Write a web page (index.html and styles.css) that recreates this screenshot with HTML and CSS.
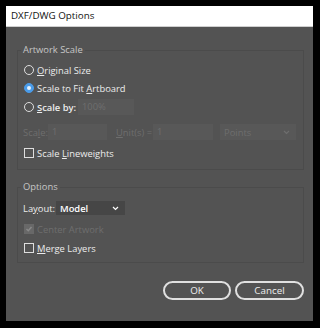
FILE: index.html
```html
<!DOCTYPE html>
<html lang="en">
<head>
    <meta charset="UTF-8">
    <meta name="viewport" content="width=device-width, initial-scale=1.0">
    <title>DXF/DWG Options</title>
    <link rel="stylesheet" href="styles.css">
</head>
<body>
    <div class="dialog">
        <div class="titlebar">DXF/DWG Options</div>
        <div class="content">
            <fieldset class="group group-scale">
                <legend>Artwork Scale</legend>
                <div class="row row-first">
                    <span class="radio"></span>
                    <span><u>O</u>riginal Size</span>
                </div>
                <div class="row">
                    <span class="radio checked"></span>
                    <span>Scale to Fit <u>A</u>rtboard</span>
                </div>
                <div class="row row-tall">
                    <span class="radio"></span>
                    <span class="label-by"><u>S</u>cale by:</span>
                    <span class="field field-pct">100%</span>
                </div>
                <div class="row row-tall row-units disabled">
                    <span class="label-scale">Sca<u>l</u>e:</span>
                    <span class="field field-scale">1</span>
                    <span class="label-unit"><u>U</u>nit(s) =</span>
                    <span class="field field-unit">1</span>
                    <span class="select select-points">
                        Points
                        <svg class="chevron" width="7" height="5" viewBox="0 0 7 5"><polyline points="1,1 3.5,3.5 6,1" fill="none" stroke="currentColor" stroke-width="1.2"/></svg>
                    </span>
                </div>
                <div class="row row-lines">
                    <span class="check"></span>
                    <span>Scale <u>L</u>ineweights</span>
                </div>
            </fieldset>

            <fieldset class="group group-options">
                <legend>Options</legend>
                <div class="row row-tall row-layout">
                    <span class="label-layout">La<u>y</u>out:</span>
                    <span class="select select-layout">
                        Model
                        <svg class="chevron" width="7" height="5" viewBox="0 0 7 5"><polyline points="1,1 3.5,3.5 6,1" fill="none" stroke="currentColor" stroke-width="1.2"/></svg>
                    </span>
                </div>
                <div class="row row-center disabled">
                    <span class="check checked">
                        <svg width="8" height="8" viewBox="0 0 8 8"><polyline points="1.5,4 3.3,5.8 6.5,2" fill="none" stroke="#8a8a8a" stroke-width="1.4"/></svg>
                    </span>
                    <span>Center Artwork</span>
                </div>
                <div class="row row-merge">
                    <span class="check"></span>
                    <span><u>M</u>erge Layers</span>
                </div>
            </fieldset>

            <div class="buttons">
                <button class="btn btn-ok">OK</button>
                <button class="btn btn-cancel">Cancel</button>
            </div>
        </div>
    </div>
</body>
</html>
```

FILE: styles.css
```css
body {
    margin: 0;
    padding: 0;
    background-color: #000;
    font-family: "Open Sans", "Noto Sans", sans-serif;
    font-size: 9.4px;
}

.dialog {
    margin: 6px;
    width: 307px;
    height: 315px;
    background-color: #535353;
    color: #ececec;
}

.titlebar {
    height: 20px;
    line-height: 20px;
    padding-left: 5px;
    background-color: #fff;
    border-bottom: 1px solid #cfcfcf;
    color: #111;
    font-size: 9.8px;
}

.content {
    padding: 16px 9px 0 11px;
}

.group {
    margin: 0;
    min-width: 0;
    border: 1px solid #4b4b4b;
    padding: 4px 0 7px 5px;
}

.group legend {
    height: 14px;
    line-height: 14px;
    padding: 0 2px;
    margin-left: -2px;
    color: #c6c6c6;
}

.group-options {
    margin-top: 10px;
    padding-bottom: 5px;
}

.row {
    display: flex;
    align-items: center;
    height: 18px;
}

.row-tall {
    height: 20px;
}

.row-units {
    margin-top: 5px;
}

.row-lines {
    margin-top: 2px;
}

.row-center {
    margin-top: 2px;
}

.row-merge {
    margin-top: 1px;
}

.disabled {
    color: #6e6e6e;
}

.radio {
    width: 10px;
    height: 10px;
    box-sizing: border-box;
    border: 1px solid #dedede;
    border-radius: 50%;
    margin: 0 3px 0 1px;
    position: relative;
}

.radio.checked {
    background-color: #4a9be8;
    border-color: #4a9be8;
}

.radio.checked::after {
    content: "";
    position: absolute;
    left: 2px;
    top: 2px;
    width: 4px;
    height: 4px;
    border-radius: 50%;
    background-color: #e6f1fc;
}

.check {
    width: 10px;
    height: 10px;
    box-sizing: border-box;
    border: 1px solid #dedede;
    margin: 0 3px 0 1px;
    display: flex;
    align-items: center;
    justify-content: center;
}

.check.checked {
    background-color: #686868;
    border-color: #686868;
}

.label-by {
    width: 41px;
    font-weight: 600;
}

.field {
    height: 16px;
    line-height: 16px;
    box-sizing: border-box;
    padding-left: 4px;
    background-color: #585858;
    color: #6e6e6e;
}

.field-pct {
    width: 56px;
}

.label-scale {
    width: 25px;
}

.field-scale {
    width: 59px;
}

.label-unit {
    width: 37px;
    margin-left: 9px;
}

.field-unit {
    width: 60px;
}

.select {
    height: 16px;
    box-sizing: border-box;
    padding: 0 6px 0 4px;
    display: flex;
    align-items: center;
    justify-content: space-between;
}

.select-points {
    width: 76px;
    margin-left: 7px;
    background-color: #585858;
    color: #6e6e6e;
}

.label-layout {
    width: 33px;
}

.select-layout {
    width: 69px;
    height: 14px;
    background-color: #464646;
    color: #fff;
    font-weight: 600;
}

.buttons {
    display: flex;
    justify-content: flex-end;
    gap: 4px;
    margin-top: 18px;
}

.btn {
    height: 19px;
    width: 68px;
    padding: 0;
    border: 2px solid #e0e0e0;
    border-radius: 10px;
    background: none;
    color: #eeeeee;
    font-family: inherit;
    font-size: 9.8px;
}

.btn-cancel {
    width: 69px;
}
```
